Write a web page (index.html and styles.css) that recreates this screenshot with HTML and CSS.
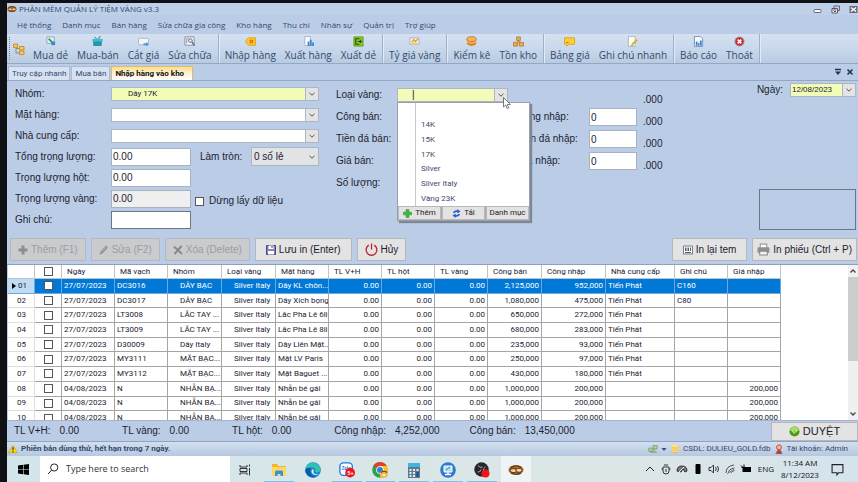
FILE: index.html
```html
<!DOCTYPE html>
<html lang="vi">
<head>
<meta charset="utf-8">
<title>PHẦN MỀM QUẢN LÝ TIỆM VÀNG v3.3</title>
<link rel="stylesheet" href="styles.css">
</head>
<body>
<svg class="defs" aria-hidden="true">
  <symbol id="down" viewBox="0 0 8 8"><path d="M1.5 2.8 4 5.2 6.5 2.8" fill="none" stroke="#555" stroke-width="1"/></symbol>
  <symbol id="ring" viewBox="0 0 16 12"><ellipse cx="8" cy="6" rx="7.500" ry="4.800" fill="#b87430"/><ellipse cx="5.500" cy="6.500" rx="3.600" ry="2.200" fill="#e9cfa6" stroke="#6e3f12" stroke-width="1.200"/><ellipse cx="11" cy="6.300" rx="3.200" ry="2" fill="#f3dfc0" stroke="#7d4a16" stroke-width="1.200"/><path d="M2.500 3.500Q8 .2 13.500 3.600M3 9.300q5 2 10-.2" fill="none" stroke="#5a3410" stroke-width="1.200"/></symbol>
</svg>
<div class="app">
  <header class="titlebar">
    <svg class="i-title"><use href="#ring"/></svg>
    <h1>PHẦN MỀM QUẢN LÝ TIỆM VÀNG v3.3</h1>
    <div class="winbtns">
      <button aria-label="Thu nhỏ"><svg viewBox="0 0 9 9"><rect x="1" y="4.5" width="7" height="3" rx="1" fill="#fff" stroke="#667"/></svg></button>
      <button aria-label="Khôi phục"><svg viewBox="0 0 9 9"><path d="M3 3V1h5.500v4.500H7" fill="none" stroke="#667"/><path d="M1 3.500h5.500v4.500H1zM2 5h3.500M3 6.500h2" fill="#fff" stroke="#556"/></svg></button>
      <button aria-label="Đóng"><svg viewBox="0 0 9 9"><rect x=".5" y="1" width="8" height="7" fill="#667"/><path d="m2 2.500 5 4M7 2.500l-5 4" stroke="#fff" stroke-width="1.500"/></svg></button>
    </div>
  </header>
  <nav class="menubar">
    <a href="#">Hệ thống</a><a href="#">Danh mục</a><a href="#">Bán hàng</a><a href="#">Sửa chữa gia công</a><a href="#">Kho hàng</a><a href="#">Thu chi</a><a href="#">Nhân sự</a><a href="#">Quản trị</a><a href="#">Trợ giúp</a>
  </nav>
  <div class="toolbar">
    <span class="grip"></span>
    <button class="tree" aria-label="Cây thư mục"><svg viewBox="0 0 12 12"><path d="M3 4v6h4M3 5.500h4" fill="none" stroke="#8a8a80"/><path d="M.5 1h4v3.500h-4zM6.500 3.500h4.500v3.500H6.500zM6.500 8h4.500v3.500H6.500z" fill="#f3c766" stroke="#c7922f"/></svg></button>
    <div class="tools">
      <button><svg viewBox="0 0 12 12"><path d="M2 1h8v7H2z" fill="#e6f3ff" stroke="#7fa6cc"/><path d="m4 3 5 5" stroke="#39a03b" stroke-width="2"/><path d="M7 6h4v4H7z" fill="#3d86cf"/></svg>Mua dẻ</button>
      <button><svg viewBox="0 0 12 12"><path d="M1 5h10l-.5 6h-9z" fill="#2596ad"/><path d="M.5 3h11v3H.5z" fill="#41bccb"/><path d="m3 1 2 2M9 0 7 3" stroke="#23708a"/></svg>Mua-bán</button>
      <button><svg viewBox="0 0 12 12"><rect x=".5" y="2.500" width="11" height="7" rx="1" fill="#f3f5f8" stroke="#aab2bf"/><path d="M6 8h3V6.500L12 9l-3 2.500V10H6z" fill="#4a9be0"/></svg>Cắt giá</button>
      <button><svg viewBox="0 0 12 12"><path d="M1 1h10v9H1z" fill="#fafbff" stroke="#8089a0"/><path d="M3 3v5M3 3h2" stroke="#8089a0"/><circle cx="7" cy="5" r="2" fill="#d9eaff" stroke="#667"/><path d="m8.500 6.500 3 4" stroke="#667" stroke-width="1.500"/></svg>Sửa chữa</button>
    </div>
    <div class="tools">
      <button><svg viewBox="0 0 12 12"><path d="m.5 6 3-4h8v8h-8z" fill="#ffc62b" stroke="#e5a414"/><path d="M5 5h4M5 7h4M6 4v4M8 4v4" stroke="#c86b10" stroke-width=".8"/></svg>Nhập hàng</button>
      <button><svg viewBox="0 0 12 12"><path d="M2 .5h6v10H2z" fill="#fafcff" stroke="#9fb4cc"/><path d="M5 6h2v5H5zM7.500 4h2v7h-2zM10 7h2v4h-2z" fill="#3d86cf"/></svg>Xuất hàng</button>
      <button><svg viewBox="0 0 12 12"><path d="M1 1h10v10H1z" fill="#8cc927" stroke="#5e9c16"/><path d="M7 3H3v6h4M5 6h5M8 4v4" fill="none" stroke="#17511a" stroke-width="1.200"/></svg>Xuất dẻ</button>
    </div>
    <div class="tools">
      <button><svg viewBox="0 0 12 12"><path d="M1 2h10v7H1z" fill="#f6f4ee" stroke="#a9adb6"/><path d="m3 7 2-3 2 2 3-3" fill="none" stroke="#e3a13a" stroke-width="1.500"/><path d="M3 7h6v3H3z" fill="#ecc48b"/></svg>Tỷ giá vàng</button>
    </div>
    <div class="tools">
      <button><svg viewBox="0 0 12 12"><path d="M1 3v6q5 4 10 0V3z" fill="#dd8425"/><ellipse cx="6" cy="3.500" rx="5" ry="2.800" fill="#f6b45b" stroke="#c97622"/><path d="M1 6q5 3.500 10 0" fill="none" stroke="#ffd28d"/></svg>Kiểm kê</button>
      <button><svg viewBox="0 0 12 12"><path d="M6 4v3M3 8l3-2 3 2" fill="none" stroke="#9b7645"/><path d="M4 1h4v4H4zM.5 7h4.500v4H.5zM7 7h4.500v4H7z" fill="#e5ab58" stroke="#bd812f"/></svg>Tồn kho</button>
    </div>
    <div class="tools">
      <button><svg viewBox="0 0 12 12"><path d="M.5 2h11v7H5l-2 2V9H.5z" fill="#ffd034" stroke="#dba416"/><path d="M2 7h3" stroke="#d85b2b"/></svg>Bảng giá</button>
      <button><svg viewBox="0 0 12 12"><path d="M1.500.5H9v11H1.500z" fill="#fffef2" stroke="#a9b8b0"/><path d="m6 9 5-5" stroke="#e0a52c" stroke-width="2"/><path d="M4 10h3" stroke="#4c9f3f"/></svg>Ghi chú nhanh</button>
    </div>
    <div class="tools">
      <button><svg viewBox="0 0 12 12"><path d="M1.500.5H8l2.500 2.500v8.500h-9z" fill="#fafcff" stroke="#6c8fbd"/><path d="M3 6h2v4.500H3zM5.500 7.500h1.500v3H5.500zM7.500 5h2v5.500h-2z" fill="#3b80cc"/></svg>Báo cáo</button>
      <button><svg viewBox="0 0 12 12"><circle cx="6" cy="6" r="5" fill="#cf2929" stroke="#969ba5"/><path d="m4 4 4 4M8 4 4 8" stroke="#fff" stroke-width="1.800"/></svg>Thoát</button>
    </div>
  </div>
  <div class="tabs">
    <button>Truy cập nhanh</button><button>Mua bán</button><button class="active">Nhập hàng vào kho</button>
    <div class="tabctl">
      <button aria-label="Danh sách thẻ"><svg viewBox="0 0 8 8"><path d="M1 1.500h6" stroke="#1f3355" stroke-width="1.500"/><path d="M1 3.500h6L4 7z" fill="#1f3355"/></svg></button>
      <button aria-label="Đóng thẻ"><svg viewBox="0 0 8 8"><path d="m1.500 1.500 5 5M6.500 1.500l-5 5" stroke="#1f3355" stroke-width="1.600"/></svg></button>
    </div>
  </div>

  <main class="form">
    <div class="fields">
      <div class="left">
        <label for="nhom">Nhóm:</label>
        <div class="combo wide yellow"><select id="nhom"><option>Dây 17K</option></select><span class="arrow"><svg><use href="#down"/></svg></span></div>
        <label for="mat">Mặt hàng:</label>
        <div class="combo wide"><select id="mat"><option></option></select><span class="arrow"><svg><use href="#down"/></svg></span></div>
        <label for="ncc">Nhà cung cấp:</label>
        <div class="combo wide"><select id="ncc"><option></option></select><span class="arrow"><svg><use href="#down"/></svg></span></div>
        <label for="tong">Tổng trọng lượng:</label><input id="tong" value="0.00">
        <div class="round"><label for="tron">Làm tròn:</label><div class="combo grey"><select id="tron"><option>0 số lẻ</option></select><span class="arrow"><svg><use href="#down"/></svg></span></div></div>
        <label for="hot">Trọng lượng hột:</label><input id="hot" value="0.00"><span></span>
        <label for="vang">Trọng lượng vàng:</label><input id="vang" value="0.00" readonly>
        <label class="stop"><input type="checkbox">Dừng lấy dữ liệu</label>
        <label for="ghichu">Ghi chú:</label><input id="ghichu" class="note">
      </div>
      <div class="mid">
        <label for="loai">Loại vàng:</label>
        <div class="lookup">
          <div class="combo yellow"><input id="loai" value="|"><button class="arrow" aria-label="Mở danh sách"><svg><use href="#down"/></svg></button></div>
          <div class="popup">
            <ul><li></li><li>14K</li><li>15K</li><li>17K</li><li>Silver</li><li>Silver Italy</li><li>Vàng 23K</li></ul>
            <div class="popbtns">
              <button><svg viewBox="0 0 10 10"><path d="M3.500.5h3v3h3v3h-3v3h-3v-3h-3v-3h3z" fill="#3cb83c" stroke="#268a2a" stroke-width=".6"/></svg>Thêm</button>
              <button><svg viewBox="0 0 10 10"><path d="M1 4.500q1-3.500 5-3V0L9.500 2.800 6 5V3.500Q4 3 3 4.500zM9 5.500q-1 3.500-5 3V10L.5 7.200 4 5v1.500q2 .5 3-1z" fill="#2a62cf"/></svg>Tải</button>
              <button>Danh mục</button>
            </div>
          </div>
          <svg class="cursor" viewBox="0 0 8 12"><path d="M.5.5v9.500l2.200-2 1.500 3.500 1.600-.7L4.300 7.500h3z" fill="#fff" stroke="#444" stroke-width=".7"/></svg>
        </div>
        <span class="lab r2">Công bán:</span><label class="c3 r2" for="cn">Công nhập:</label><input class="r2" id="cn" value="0">
        <span class="lab r3">Tiền đá bán:</span><label class="c3 r3" for="td">Tiền đá nhập:</label><input class="r3" id="td" value="0">
        <span class="lab r4">Giá bán:</span><label class="c3 r4" for="gn">Giá nhập:</label><input class="r4" id="gn" value="0">
        <span class="lab r5">Số lượng:</span>
      </div>
      <div class="units"><span>.000</span><span>.000</span><span>.000</span><span>.000</span></div>
      <div class="right">
        <div class="date"><label for="ngay">Ngày:</label><div class="combo yellow"><input id="ngay" value="12/08/2023"><button class="arrow" aria-label="Chọn ngày"><svg><use href="#down"/></svg></button></div></div>
        <div class="preview"></div>
      </div>
    </div>
    <div class="actions">
      <button disabled><svg viewBox="0 0 10 10"><path d="M3.500.5h3v3h3v3h-3v3h-3v-3h-3v-3h3z" fill="#8f8f8f"/></svg>Thêm (F1)</button>
      <button disabled><svg viewBox="0 0 10 10"><path d="m.5 9.500 1-3 5.500-6 2 2-5.500 6z" fill="#8f8f8f"/><path d="m2 7.500 5-5.500" stroke="#ccc" stroke-width=".7"/></svg>Sửa (F2)</button>
      <button disabled><svg viewBox="0 0 10 10"><path d="m1 1.500 8 7.500M8.500 1 1.500 9" stroke="#8a8a8a" stroke-width="2"/></svg>Xóa (Delete)</button>
      <button class="roomy"><svg viewBox="0 0 10 10"><path d="M.5.5h9v9h-9z" fill="#8285b5" stroke="#44487e"/><path d="M2.500.5h5v3.500h-5zM2 6h6v3.500H2z" fill="#fff"/><path d="M6 1v2" stroke="#44487e"/></svg>Lưu in (Enter)</button>
      <button><svg class="big" viewBox="0 0 12 12"><path d="M3.500 2a5 5 0 1 0 5 0M6 .5v5.500" fill="none" stroke="#b5232d" stroke-width="1.200"/></svg>Hủy</button>
      <span class="grow"></span>
      <button class="roomy"><svg viewBox="0 0 10 10"><path d="M.5 1h9v8h-9z" fill="#fff" stroke="#6c7c9c"/><path d="M2.500 2.500v3.500M4 2.500v3.500M5.500 2.500v3.500M7.500 2.500v3.500M2 7.500h6" stroke="#333" stroke-width=".8"/></svg>In lại tem</button>
      <button class="tight"><svg class="big" viewBox="0 0 12 12"><path d="M3 1h6v4H3z" fill="#fff" stroke="#999"/><path d="M.5 5q0-1 1-1h9q1 0 1 1v4H.5z" fill="#8c8f94"/><path d="M2.500 7.500h7V11h-7z" fill="#f4f4f4" stroke="#888"/></svg>In phiếu (Ctrl + P)</button>
    </div>
  </main>

  <section class="gridbox">
    <div class="scroll">
    <table>
      <colgroup><col class="w27"><col class="w27"><col class="w53"><col class="w53"><col class="w54"><col class="w54"><col class="w53"><col class="w53"><col class="w53"><col class="w53"><col class="w54"><col class="w64"><col class="w69"><col class="w53"><col class="w53"></colgroup>
      <thead><tr><th></th><th class="ck"><input type="checkbox" aria-label="Chọn tất cả"></th><th>Ngày</th><th>Mã vạch</th><th>Nhóm</th><th>Loại vàng</th><th>Mặt hàng</th><th>TL V+H</th><th>TL hột</th><th>TL vàng</th><th>Công bán</th><th>Công nhập</th><th>Nhà cung cấp</th><th>Ghi chú</th><th>Giá nhập</th></tr></thead>
      <tbody>
      <tr class="sel"><td><svg class="mark" viewBox="0 0 4 6"><path d="M0 0v6l4-3z"/></svg>01</td><td class="ck"><input type="checkbox" aria-label="01"></td><td>27/07/2023</td><td>DC3016</td><td>DÂY BẠC</td><td>Silver Italy</td><td>Dây KL chôn...</td><td>0.00</td><td>0.00</td><td>0.00</td><td>2,125,000</td><td>952,000</td><td>Tiến Phát</td><td>C160</td><td></td></tr>
      <tr><td>02</td><td class="ck"><input type="checkbox" aria-label="02"></td><td>27/07/2023</td><td>DC3017</td><td>DÂY BẠC</td><td>Silver Italy</td><td>Dây Xích bọng</td><td>0.00</td><td>0.00</td><td>0.00</td><td>1,080,000</td><td>475,000</td><td>Tiến Phát</td><td>C80</td><td></td></tr>
      <tr><td>03</td><td class="ck"><input type="checkbox" aria-label="03"></td><td>27/07/2023</td><td>LT3008</td><td>LẮC TAY ...</td><td>Silver Italy</td><td>Lắc Pha Lê 6li</td><td>0.00</td><td>0.00</td><td>0.00</td><td>650,000</td><td>272,000</td><td>Tiến Phát</td><td></td><td></td></tr>
      <tr><td>04</td><td class="ck"><input type="checkbox" aria-label="04"></td><td>27/07/2023</td><td>LT3009</td><td>LẮC TAY ...</td><td>Silver Italy</td><td>Lắc Pha Lê 8li</td><td>0.00</td><td>0.00</td><td>0.00</td><td>680,000</td><td>283,000</td><td>Tiến Phát</td><td></td><td></td></tr>
      <tr><td>05</td><td class="ck"><input type="checkbox" aria-label="05"></td><td>27/07/2023</td><td>D30009</td><td>Dây Italy</td><td>Silver Italy</td><td>Dây Liên Mặt...</td><td>0.00</td><td>0.00</td><td>0.00</td><td>235,000</td><td>93,000</td><td>Tiến Phát</td><td></td><td></td></tr>
      <tr><td>06</td><td class="ck"><input type="checkbox" aria-label="06"></td><td>27/07/2023</td><td>MY3111</td><td>MẶT BẠC...</td><td>Silver Italy</td><td>Mặt LV Paris</td><td>0.00</td><td>0.00</td><td>0.00</td><td>250,000</td><td>97,000</td><td>Tiến Phát</td><td></td><td></td></tr>
      <tr><td>07</td><td class="ck"><input type="checkbox" aria-label="07"></td><td>27/07/2023</td><td>MY3112</td><td>MẶT BẠC...</td><td>Silver Italy</td><td>Mặt Baguet ...</td><td>0.00</td><td>0.00</td><td>0.00</td><td>430,000</td><td>180,000</td><td>Tiến Phát</td><td></td><td></td></tr>
      <tr><td>08</td><td class="ck"><input type="checkbox" aria-label="08"></td><td>04/08/2023</td><td>N</td><td>NHẪN BẠ...</td><td>Silver Italy</td><td>Nhẫn bé gái</td><td>0.00</td><td>0.00</td><td>0.00</td><td>1,000,000</td><td>200,000</td><td></td><td></td><td>200,000</td></tr>
      <tr><td>09</td><td class="ck"><input type="checkbox" aria-label="09"></td><td>04/08/2023</td><td>N</td><td>NHẪN BẠ...</td><td>Silver Italy</td><td>Nhẫn bé gái</td><td>0.00</td><td>0.00</td><td>0.00</td><td>1,000,000</td><td>200,000</td><td></td><td></td><td>200,000</td></tr>
      <tr><td>10</td><td class="ck"><input type="checkbox" aria-label="10"></td><td>04/08/2023</td><td>N</td><td>NHẪN BẠ...</td><td>Silver Italy</td><td>Nhẫn bé gái</td><td>0.00</td><td>0.00</td><td>0.00</td><td>1,000,000</td><td>200,000</td><td></td><td></td><td>200,000</td></tr>
      </tbody>
    </table>
    </div>
    <div class="vbar"><svg viewBox="0 0 8 8"><path d="M1.500 5.500 4 3l2.500 2.500" fill="none" stroke="#444" stroke-width="1.300"/></svg><span class="thumb"></span><svg viewBox="0 0 8 8"><path d="M1.500 2.500 4 5l2.500-2.500" fill="none" stroke="#444" stroke-width="1.300"/></svg></div>
  </section>

  <section class="totals">
    <dl>
      <div><dt>TL V+H:</dt><dd>0.00</dd></div>
      <div><dt>TL vàng:</dt><dd>0.00</dd></div>
      <div><dt>TL hột:</dt><dd>0.00</dd></div>
      <div><dt>Công nhập:</dt><dd>4,252,000</dd></div>
      <div class="sale"><dt>Công bán:</dt><dd>13,450,000</dd></div>
    </dl>
    <button><svg viewBox="0 0 12 12"><circle cx="6" cy="6" r="5.500" fill="#4f9a1a"/><path d="M1 5q2-5 6-4.300 3 .6 4 4-4 2.800-10 .3z" fill="#a5dc62"/><path d="m3 5 2.500 3L9 5" fill="none" stroke="#d9f5b5"/></svg>DUYỆT</button>
  </section>

  <footer class="status">
    <svg viewBox="0 0 12 10"><path d="M6 .5 11.500 9.500H.5z" fill="#ffd91f" stroke="#b99a1c" stroke-width=".7"/><path d="M6 3v3.500M6 7.500V9" stroke="#222" stroke-width="1.300"/></svg>
    <strong>Phiên bản dùng thử, hết hạn trong 7 ngày.</strong>
    <span class="grow"></span>
    <svg class="net" viewBox="0 0 12 10"><path d="M1 4h5v4H1zM6 1h5v4H6z" fill="#a8d49b" stroke="#779b70"/><path d="M3 9h8M8 6v3" stroke="#7da06f"/></svg>
    <svg class="tiny" viewBox="0 0 6 6"><path d="M.5 2h5L3 5z" fill="#31507e"/></svg>
    <svg viewBox="0 0 12 12"><path d="M2 2.500v7q4 3 8 0v-7z" fill="#f2b93b"/><ellipse cx="6" cy="2.500" rx="4" ry="1.800" fill="#ffe08a"/><path d="M2 5.500q4 2.500 8 0M2 8q4 2.500 8 0" fill="none" stroke="#fff0b5"/></svg>
    <span>CSDL: DULIEU_GOLD.fdb</span>
    <svg viewBox="0 0 12 12"><circle cx="6" cy="4" r="3" fill="#f0b591" stroke="#b5453f"/><path d="M3 11V9l2-2h2l2 2v2z" fill="#c53b35"/><path d="M2 11.500h8" stroke="#704a44"/></svg>
    <span>Tài khoản: Admin</span>
  </footer>
</div>

<div class="taskbar">
  <button class="start" aria-label="Start"><svg viewBox="0 0 11 11"><path d="M0 1.500 5 .8v4.400H0zM5.600.7 11 0v5.200H5.600zM0 5.800h5v4.400l-5-.7zM5.600 5.800H11V11l-5.400-.7z"/></svg></button>
  <label class="search"><svg viewBox="0 0 12 12"><circle cx="7.200" cy="4.500" r="3.600" fill="none" stroke="#222"/><path d="M4.600 7.200 1 11" stroke="#222"/></svg><input placeholder="Type here to search" aria-label="Type here to search"></label>
  <div class="apps">
    <button aria-label="Task view"><svg viewBox="0 0 16 16"><path d="M3 3v2h7V3M3 13v-2h7v2M3 6.500h7v3H3zM12.500 2.500v2M12.500 6v7.500" fill="none" stroke="#222" stroke-width=".9"/></svg></button>
    <button class="on" aria-label="Thư mục"><svg viewBox="0 0 16 16"><path d="M1 2h5l1.500 2H15v10H1z" fill="#f2b62e"/><path d="M1 5h14v9H1z" fill="#ffd766"/><path d="M4 14v-4q0-1.500 1.500-1.500h5Q12 8.500 12 10v4h-2.500v-2h-3v2z" fill="#3592dc"/></svg></button>
    <button aria-label="Edge"><svg viewBox="0 0 16 16"><circle cx="8" cy="8" r="7.800" fill="#1686cf"/><path d="M.3 7.500A7.800 7.800 0 0 1 15.700 7c.3 2.500-2 3.800-4.200 3.500-2-.3-1.500-1.300-1.200-2.200C10.500 6 8 5 6 5.300 3.500 5.500 1.300 6.200.3 7.500z" fill="#35c1b1"/><path d="M6 6.500C4 9 5.500 14 11 14.700 6 17 0 13 .3 8 1.500 6 4 5.500 6 6.500z" fill="#0c5ba8"/><path d="M7 7.500q-1.500 3 1.500 5 3 1.200 5.500-.5-5 1-5.500-1.500.3-1.500 0-3z" fill="#dff1f6"/></svg></button>
    <button class="on" aria-label="Zalo"><svg viewBox="0 0 18 18"><rect x="1" y="1" width="14" height="14" rx="4" fill="#fff" stroke="#1979e6" stroke-width="1.500"/><text x="3" y="9" class="zalo">Zalo</text><circle cx="12.500" cy="12" r="5.500" fill="#ea1620"/><text x="9.500" y="14.500" class="badge">5+</text></svg></button>
    <button class="on" aria-label="Chrome"><svg viewBox="0 0 16 16"><circle cx="8" cy="8" r="7.800" fill="#2ea24e"/><path d="M8 8 1.200 4.100A7.800 7.800 0 0 1 14.800 4.100H8z" fill="#e2402f"/><path d="M8 8V4.100h6.800A7.800 7.800 0 0 1 8 15.800z" fill="#fbc31b"/><circle cx="8" cy="8" r="3.800" fill="#fff"/><circle cx="8" cy="8" r="3" fill="#2f7de1"/><circle cx="12" cy="12" r="3.800" fill="#e8b64c"/><path d="M9 10.500q3-2.500 6 0" fill="none" stroke="#753a1d" stroke-width="1.200"/><path d="M10 12.500h4q-2 3-4 0z" fill="#fff"/></svg></button>
    <button class="on" aria-label="Máy tính"><svg viewBox="0 0 16 16"><path d="M2 1h12v15H2z" fill="#63788a"/><path d="M2 1h12v4H2z" fill="#40b5e2"/><path d="M3.500 7h2v2h-2zM7 7h2v2H7zM3.500 10h2v2h-2zM7 10h2v2H7zM3.500 13h2v2h-2zM7 13h2v2H7zM10.500 7h2v2h-2z" fill="#e2edf2"/><path d="M10.500 10h2v5h-2z" fill="#174f7a"/></svg></button>
    <button class="on" aria-label="Điều khiển từ xa"><svg viewBox="0 0 16 16"><circle cx="8" cy="8" r="7.800" fill="#2b7bc9"/><path d="M4 4h8v6H4z" fill="#b8dcf8" stroke="#fff"/><path d="M5 12.500h6M8 10v2.500" stroke="#fff" stroke-width="1.300"/><path d="m6 8 4-3" stroke="#2b7bc9"/></svg></button>
    <button class="on" aria-label="OBS"><svg viewBox="0 0 16 16"><circle cx="7.500" cy="7.500" r="7.200" fill="#29262b"/><path d="M4 3.500q2 3 4.500 1.500M11.500 5q-3 1.500-2 4M3.500 10q3 .5 3.500-2.500" fill="none" stroke="#aaa" stroke-width="1"/><circle cx="11.500" cy="11.500" r="4" fill="#f5121b"/></svg></button>
    <button class="on current" aria-label="Tiệm vàng"><svg><use href="#ring"/></svg></button>
  </div>
  <span class="grow"></span>
  <div class="tray">
    <svg viewBox="0 0 12 12"><path d="m2 8 4-4 4 4" fill="none" stroke="#222"/></svg>
    <svg viewBox="0 0 12 12"><path d="M3 4h6v4q0 3-3 3T3 8zM3 6H1.500M9 6h1.500M4 2h4M6 6v3" fill="none" stroke="#222" stroke-width=".9"/></svg>
    <svg viewBox="0 0 12 12"><path d="M1 8q0-5 5-5t5 5l-2 1-2-3-2 3z" fill="#777" stroke="#333"/><path d="m2 10 6-6" stroke="#eee"/></svg>
    <svg viewBox="0 0 12 12"><rect x="3.500" y="1" width="5" height="10" rx="1"/></svg>
    <svg viewBox="0 0 12 12"><path d="M1 4.500h2L5.500 2v8L3 7.500H1zM7.500 4q1.500 2 0 4M9.500 3q2 3 0 6" fill="none" stroke="#222" stroke-width=".9"/></svg>
    <svg viewBox="0 0 12 12"><path d="M2 10Q2 3 10 2M4.500 10q0-4 6-5M7 10q0-2 3.500-2.500" fill="none" stroke="#555"/><path d="m3 11 7-5" stroke="#888"/></svg>
    <svg viewBox="0 0 12 12"><path d="M2.500 4H11v5H2.500z"/><path d="M1 2.500 4.500 6M4 1.500V4M1.500 4.500H4" stroke="#000"/></svg>
    <span class="lang">ENG</span>
    <time>11:34 AM<br>8/12/2023</time>
    <svg class="bell" viewBox="0 0 12 12"><path d="M1 1.500h10v7.500H7l-1.500 2V9H1z" fill="none" stroke="#222"/></svg>
  </div>
</div>
</body>
</html>
```
FILE: styles.css
```css
* { box-sizing: border-box; }
body {
  margin: 0;
  height: 100vh;
  display: flex;
  flex-direction: column;
  padding: 3px 0 0 7px;
  background: #101114;
  overflow: hidden;
  font: 10px/12px "Liberation Sans", Arial, sans-serif;
  color: #1b2230;
}
button, input, select { font: inherit; color: inherit; margin: 0; padding: 0; border: 0; border-radius: 0; background: none; min-width: 0; }
button { white-space: nowrap; }
svg { display: block; flex: none; }
.defs { position: absolute; width: 0; height: 0; }
.grow { flex: 1; }

.app { flex: 1; min-height: 0; display: flex; flex-direction: column; background: #bbcde6; }
.titlebar, .menubar, .toolbar { font-family: "Open Sans", "Noto Sans", sans-serif; color: #33496b; }
.tabs, .status { font-family: Roboto, "Open Sans", sans-serif; color: #33496b; }
.titlebar { display: flex; align-items: center; height: 12px; gap: 2px; font-size: 8px; background: #bfd0e9; }
.titlebar h1 { margin: 0; font-size: 8px; font-weight: 400; }
.i-title { width: 10px; height: 8px; }
.winbtns { display: flex; gap: 9px; margin-left: auto; }
.winbtns svg { width: 9px; height: 9px; }
.menubar { display: flex; gap: 11px; align-items: center; height: 19px; padding-left: 10px; font-size: 8px; }
.menubar a { color: inherit; text-decoration: none; white-space: nowrap; }

.toolbar { display: flex; height: 30px; padding-left: 2px; background: linear-gradient(#d5e1f1, #c6d6ea 60%, #b9cbe0); border-bottom: 1px solid #93a8c8; }
.grip { width: 2px; margin: 3px 0; border-left: 1px dotted #6d84a8; }
.tree { padding: 0 2px; }
.tree svg { width: 12px; height: 12px; }
.tools { display: flex; gap: 9px; padding: 0 6px; border-right: 1px solid #9db1ce; box-shadow: 1px 0 #e3ebf6; }
.tools button { display: flex; flex-direction: column; align-items: center; padding-top: 2px; font-size: 10px; line-height: 16px; }
.tools svg { width: 11px; height: 11px; }

.tabs { display: flex; align-items: flex-end; gap: 1px; height: 17px; padding-left: 1px; border-bottom: 1px solid #93a8c8; font-size: 8px; }
.tabs > button { height: 14px; padding: 0 3px; background: #d6e2f2; border: 1px solid #a9bbd6; border-bottom: 0; }
.tabs > .active { font-weight: 700; color: #111; padding-right: 8px; background: linear-gradient(#ffdf8c, #fff6dc 60%, #fff); border-color: #d8bd78; }
.tabctl { display: flex; gap: 4px; margin: 0 4px 4px auto; }
.tabctl svg { width: 8px; height: 8px; }

.form { padding: 1px 1px 3px 3px; border-bottom: 1px solid #8fa0bb; }
.fields { display: flex; height: 148px; padding-left: 5px; }
.fields input, .fields select { border: 1px solid #a9b2c0; background: #fff; height: 18px; width: 100%; padding: 0 1px; }
.left { display: grid; grid-template-columns: 96px 80px 1fr; grid-auto-rows: 21px; align-items: center; width: 304px; padding-top: 1px; }
.left label, .mid label, .lab, .units { white-space: nowrap; }
.fields .wide { grid-column: 2 / -1; }
.fields input[readonly] { background: #efefef; }
.fields input.note { border-color: #6e7683; }
.combo { display: grid; grid-template-columns: 1fr 13px; height: 14px; border: 1px solid #adb6c4; background: #fff; }
.fields .combo select, .fields .combo input { height: 12px; border: 0; background: none; grid-row: 1; grid-column: 1; }
.fields .combo select { grid-column: 1 / -1; appearance: none; padding-left: 16px; font-family: Roboto, sans-serif; font-size: 8px; }
.combo .arrow { grid-row: 1; grid-column: 2; display: flex; align-items: center; justify-content: center; background: #e4e4e4; border-left: 1px solid #adb6c4; pointer-events: none; }
.arrow svg { width: 8px; height: 8px; }
.fields .yellow { background: #f2fcb8; }
.round { display: flex; align-items: center; justify-content: space-between; padding-left: 9px; }
.fields .grey { width: 68px; height: 19px; background: #e2e3e5; }
.fields .grey select { height: 17px; padding-left: 2px; font-family: inherit; font-size: 10px; }
.grey .arrow { background: none; border: 0; }
.stop { display: flex; align-items: center; gap: 5px; padding: 5px 0 0 4px; }
.fields input[type=checkbox] { width: 9px; height: 9px; }
input[type=checkbox] { appearance: none; width: 9px; height: 9px; border: 1px solid #555; background: #fff; }

.mid { display: grid; grid-template-columns: 61px 111px 9px 72px 48px; grid-auto-rows: 22px; align-items: center; align-content: start; margin-left: 17px; padding-top: 2px; }
.lab { grid-column: 1; }
.c3 { grid-column: 4; }
.mid > input { grid-column: 5; }
.r2 { grid-row: 2; } .r3 { grid-row: 3; } .r4 { grid-row: 4; } .r5 { grid-row: 5; }
.lookup { position: relative; }
.fields .lookup input { padding-left: 14px; }
.popup { position: absolute; z-index: 1; left: 0; top: 14px; width: 133px; background: #fff; border: 1px solid #9aa0aa; box-shadow: 2px 2px 1px #7d8797; font-family: Roboto, sans-serif; font-size: 8px; }
.popup ul { display: flex; flex-direction: column; height: 103px; margin: 0 0 0 17px; padding: 0; list-style: none; border-left: 1px solid #c4c8d0; color: #3e4b68; }
.popup li { flex: 1; display: flex; align-items: center; padding-left: 5px; }
.popbtns { display: flex; background: #aaa; gap: 1px; }
.popbtns button { flex: 1; display: flex; align-items: center; justify-content: center; gap: 3px; height: 14px; background: #e3e3e3; border: 1px solid #b9b9b9; color: #222; }
.popbtns svg { width: 9px; height: 9px; }
.cursor { position: absolute; z-index: 2; left: 106px; top: 9px; width: 8px; height: 12px; }
.units { display: flex; flex-direction: column; padding: 7px 0 0 6px; line-height: 22px; }
.right { display: flex; flex-direction: column; justify-content: space-between; align-items: flex-end; flex: 1; padding: 1px 1px 0 0; }
.date { display: flex; align-items: center; gap: 7px; }
.date .combo { width: 66px; font-size: 8px; }
.preview { width: 97px; height: 41px; border: 1px solid #697589; }

.actions { display: flex; gap: 5px; margin-top: 8px; }
.actions button { display: flex; align-items: center; justify-content: center; gap: 3px; height: 23px; padding: 0 7px; background: #e3e3e4; border: 1px solid #b4b7bc; }
.actions button:disabled { background: #c9cbce; color: #9b9da1; border-color: #b5b8bd; }
.actions .roomy { padding: 0 10px; }
.actions .tight { padding: 0 4px; }
.actions svg { width: 10px; height: 10px; }
.actions .big { width: 13px; height: 13px; }

.gridbox { flex: 1; min-height: 0; display: flex; margin-left: 1px; background: #fff; }
.scroll { flex: 1; min-width: 0; overflow: hidden; }
table { table-layout: fixed; width: 773px; height: 161px; border-collapse: separate; border-spacing: 0; font-family: Roboto, sans-serif; font-size: 8px; line-height: 10px; }
.w27 { width: 27px; } .w53 { width: 53px; } .w54 { width: 54px; } .w64 { width: 64px; } .w69 { width: 69px; }
th, td { padding: 0 2px; border: solid #a5a5a5; border-width: 0 1px 1px 0; text-align: left; font-weight: 400; white-space: nowrap; overflow: hidden; }
th { height: 14px; padding-left: 5px; border-color: #c3c3c3; }
td:first-child { text-align: right; padding-right: 8px; border-color: #dedede; }
td:nth-child(5), td:nth-child(6) { padding-left: 12px; }
td:nth-child(n+8):nth-child(-n+12), td:nth-child(15) { text-align: right; }
th.ck, td.ck { padding: 0; }
.ck input { display: block; margin: auto; }
.sel td { background: #0078d7; color: #fff; border-color: #6fa8dc; }
.sel td:first-child { background: #bfdcf5; color: #1b2230; }
.mark { float: left; width: 4px; height: 6px; margin: 2px; }
.vbar { display: flex; flex-direction: column; align-items: center; width: 10px; padding: 2px 0; background: #f0f0f0; }
.vbar svg { width: 8px; height: 8px; }
.thumb { width: 10px; height: 84px; margin: 2px 0 auto; background: #cdcdcd; }

.totals { display: flex; align-items: center; height: 22px; padding-left: 7px; border-top: 1px solid #a4b4cc; border-bottom: 1px solid #8fa3c3; }
.totals dl { display: flex; flex: 1; gap: 43px; margin: 0; white-space: nowrap; }
.totals dl div { display: flex; gap: 9px; }
.totals dl .sale { margin-left: -13px; }
.totals dd { margin: 0; }
.totals button { display: flex; align-items: center; justify-content: center; gap: 3px; width: 87px; height: 19px; font-size: 11px; background: #e3e3e4; border: 1px solid #b4b7bc; }
.totals svg { width: 11px; height: 11px; }

.status { display: flex; align-items: center; gap: 3px; height: 14px; padding: 0 10px 0 1px; font-size: 8px; background: linear-gradient(#d3dfef, #b6c8e0); }
.status svg { width: 10px; height: 10px; }
.status .tiny { width: 6px; height: 6px; }

.taskbar { display: flex; height: 26px; background: linear-gradient(90deg, #d3e6ec, #dce6e6 70%, #d5e3ec); font-family: "Open Sans", "Noto Sans", sans-serif; color: #111; }
.start { width: 33px; padding-left: 11px; }
.start svg { width: 11px; height: 11px; }
.search { display: flex; align-items: center; gap: 7px; width: 190px; padding-left: 7px; background: #fff; }
.search svg { width: 12px; height: 12px; }
.search input { flex: 1; font-size: 9px; }
.search input::placeholder { color: #333; opacity: 1; }
.apps { display: grid; grid-template-columns: repeat(9, 1fr); width: 301px; column-gap: 4px; }
.apps button { display: flex; align-items: center; justify-content: center; padding-top: 2px; }
.apps .on { border-bottom: 1px solid #7cc4f0; }
.apps .current { background: #eef3f6; border: 0; }
.apps svg { width: 16px; height: 16px; }
.apps .current svg { height: 12px; }
.zalo { font: 700 5px "Liberation Sans", sans-serif; fill: #1979e6; }
.badge { font: 700 6px "Liberation Sans", sans-serif; fill: #fff; }
.tray { display: flex; align-items: center; gap: 4px; padding-right: 14px; font-size: 8px; }
.tray svg { width: 12px; height: 12px; }
.tray .lang { margin-left: 2px; }
.tray time { width: 44px; text-align: center; line-height: 12px; }
.tray .bell { width: 13px; height: 13px; margin-left: 5px; }
```
